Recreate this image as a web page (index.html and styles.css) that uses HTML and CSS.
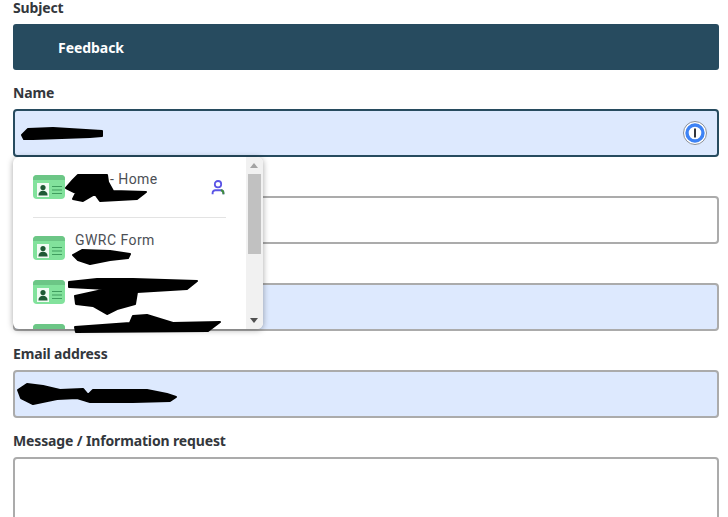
FILE: index.html
```html
<!DOCTYPE html>
<html lang="en">
<head>
<meta charset="utf-8">
<title>Contact form</title>
<link rel="stylesheet" href="styles.css">
</head>
<body>
<form class="form">
  <div class="field">
    <div class="label">Subject</div>
    <div class="subject">Feedback</div>
  </div>
  <div class="field">
    <label class="label" for="name">Name</label>
    <div class="control">
      <input class="input input-filled input-focus" id="name" type="text">
      <svg class="onepassword" width="24" height="24" viewBox="0 0 24 24" aria-hidden="true">
        <circle cx="12" cy="12" r="11.5" fill="#fff" stroke="#8a8f98" stroke-width="1"/>
        <circle cx="12" cy="12" r="8" fill="#fff" stroke="#3e83f5" stroke-width="3.4"/>
        <rect x="11" y="7.5" width="2" height="9" fill="#33363b"/>
      </svg>
    </div>
  </div>
  <div class="field">
    <div class="label"></div>
    <input class="input" type="text">
  </div>
  <div class="field">
    <div class="label"></div>
    <input class="input input-filled" type="text">
  </div>
  <div class="field">
    <label class="label" for="email">Email address</label>
    <input class="input input-filled" id="email" type="text">
  </div>
  <div class="field">
    <label class="label" for="message">Message / Information request</label>
    <textarea class="input textarea" id="message"></textarea>
  </div>
</form>

<div class="popup">
  <div class="popup-list">
    <div class="item">
      <svg class="card" width="32" height="24" viewBox="0 0 32 24" aria-hidden="true"><use href="#card"/></svg>
      <div class="item-text"><span class="name-gap"></span>- Home</div>
      <svg class="person" width="16" height="18" viewBox="0 0 16 18" aria-hidden="true">
        <circle cx="8" cy="5.2" r="3.2" fill="none" stroke="#5b55e6" stroke-width="1.8"/>
        <path d="M2.6 15.2v-1.2a2.8 2.8 0 0 1 2.8-2.8h5.2a2.8 2.8 0 0 1 2.8 2.8v1.2" fill="none" stroke="#5b55e6" stroke-width="1.9"/>
        <path d="M10.8 11.2a2.8 2.8 0 0 1 2.6 2.8v1.2" fill="none" stroke="#3f8f3a" stroke-width="1.9"/>
      </svg>
    </div>
    <div class="divider"></div>
    <div class="item">
      <svg class="card" width="32" height="24" viewBox="0 0 32 24" aria-hidden="true"><use href="#card"/></svg>
      <div class="item-text">GWRC Form</div>
    </div>
    <div class="item">
      <svg class="card" width="32" height="24" viewBox="0 0 32 24" aria-hidden="true"><use href="#card"/></svg>
    </div>
    <div class="item">
      <svg class="card" width="32" height="24" viewBox="0 0 32 24" aria-hidden="true"><use href="#card"/></svg>
    </div>
  </div>
  <div class="scrollbar">
    <div class="arrow arrow-up"></div>
    <div class="thumb"></div>
    <div class="arrow arrow-down"></div>
  </div>
</div>

<svg class="redactions" width="728" height="517" viewBox="0 0 728 517" aria-hidden="true">
  <defs>
    <symbol id="card" viewBox="0 0 32 24">
      <rect width="32" height="24" rx="4" fill="#82e29c"/>
      <path d="M0 5V4a4 4 0 0 1 4-4h24a4 4 0 0 1 4 4v1z" fill="#6cc686"/>
      <rect x="4" y="8" width="12" height="14" fill="#f2fbf4"/>
      <circle cx="10" cy="12.6" r="2.6" fill="#1f5a35"/>
      <path d="M5.4 20.5c0-3.2 2-4.7 4.6-4.7s4.6 1.5 4.6 4.7z" fill="#1f5a35"/>
      <path d="M19 11.5h10M19 15h10M19 18.5h10" stroke="#3f9d5e" stroke-width="1"/>
    </symbol>
  </defs>
  <path class="scribble" d="M22 135L28 129L53 128L102 131L102 136L90 137L33 139L24 139Z"/>
  <path class="scribble" d="M18 390L27 384L43 386L60 390L83 389L88 395L93 390L147 390L167 394L176 397L170 401L133 402L90 402L77 398L57 399L33 404L21 398Z"/>
  <path class="scribble" d="M73 180L78 175L107 175L108 182L113 191L146 192L137 199L100 201L95 194L83 201L73 199L76 193L66 188Z"/>
  <path class="scribble" d="M73 255L82 250L110 251L130 254L128 258L110 260L90 264L78 260Z"/>
  <path class="scribble" d="M69 282L97 279L133 279L197 281L187 289L137 292L135 304L117 309L107 314L93 306L76 304L75 296L107 289L69 287Z"/>
  <path class="scribble" d="M75 327L130 323L133 316L147 315L173 323L220 322L208 331L76 332Z"/>
</svg>
</body>
</html>
```
FILE: styles.css
```css
* { box-sizing: border-box; }
html, body { margin: 0; height: 517px; overflow: hidden; background: #fff; }
body { position: relative; font-family: "Noto Sans", "Liberation Sans", sans-serif; }

.form { display: flex; flex-direction: column; padding: 0 9px 0 13px; }
.field { display: flex; flex-direction: column; margin-bottom: 15px; }
.label { display: block; height: 17px; margin-bottom: 7px; font-size: 14px; line-height: 15px; font-weight: 700; letter-spacing: -0.14px; color: #33373c; }

.subject { height: 46px; padding: 1px 0 0 45px; border-radius: 3px; background: #274b5f; color: #fff; font-size: 14px; font-weight: 700; line-height: 46px; letter-spacing: -0.05px; }

.control { position: relative; display: flex; }
.input { display: block; width: 100%; height: 48px; padding: 0 10px; border: 2px solid #ababab; border-radius: 4px; background: #fff; outline: none; font: inherit; }
.input-filled { background: #dde9fe; }
.input-focus { border-color: #274b5f; }
.textarea { height: 120px; resize: none; }
.onepassword { position: absolute; top: 12px; right: 12px; }

.popup { position: absolute; left: 13px; top: 157px; display: flex; width: 250px; height: 172px; overflow: hidden; border-radius: 6px; background: #fff; box-shadow: 0 1px 6px rgba(0, 0, 0, 0.35); font-family: Roboto, "Liberation Sans", sans-serif; }
.popup-list { flex: 1; padding: 8px 20px 0; overflow: hidden; }
.item { position: relative; display: flex; flex: none; align-items: flex-start; height: 44px; padding-top: 10px; }
.card { flex: none; }
.item-text { margin: -6px 0 0 10px; font-size: 14px; line-height: 20px; letter-spacing: 0.45px; color: #4c4f55; }
.name-gap { display: inline-block; width: 35px; }
.person { position: absolute; top: 14px; right: 0; }
.divider { height: 1px; margin: 8px 0; background: #e3e3e3; }

.scrollbar { display: flex; flex: none; flex-direction: column; width: 17px; padding-right: 2px; background: #f1f1f1; }
.arrow { flex: none; height: 17px; position: relative; }
.arrow::after { content: ""; position: absolute; left: 4px; border-left: 4px solid transparent; border-right: 4px solid transparent; }
.arrow-up::after { top: 6px; border-bottom: 5px solid #a3a3a3; }
.arrow-down { margin-top: auto; }
.arrow-down::after { top: 6px; border-top: 5px solid #505050; }
.thumb { height: 80px; margin-left: 2px; background: #c1c1c1; }

.redactions { position: absolute; left: 0; top: 0; pointer-events: none; }
.scribble { fill: #000; stroke: #000; stroke-width: 2; stroke-linejoin: round; }
```
